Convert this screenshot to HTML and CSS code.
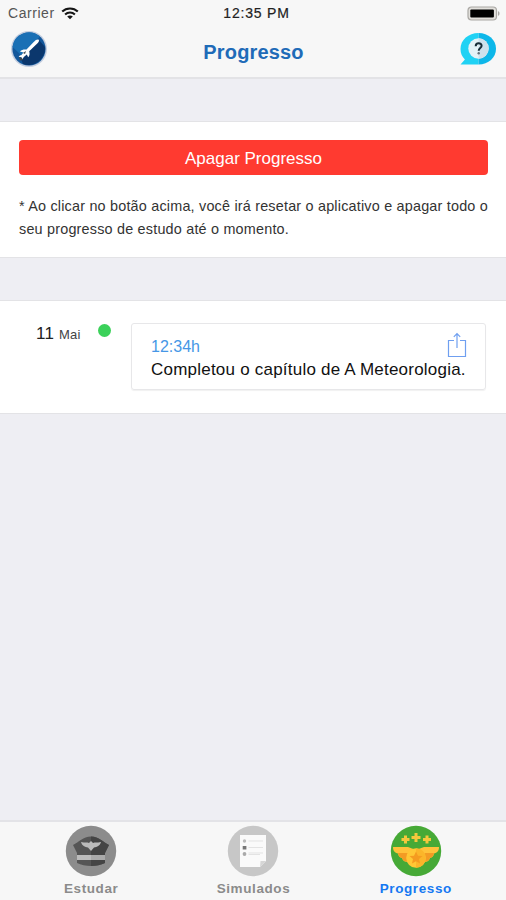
FILE: index.html
```html
<!DOCTYPE html>
<html lang="pt-BR">
<head>
<meta charset="utf-8">
<title>Progresso</title>
<link rel="stylesheet" href="styles.css">
</head>
<body>
<div class="app">
  <header class="header">
    <div class="status">
      <div class="status-left"><span class="carrier">Carrier</span>
        <svg class="wifi" width="18" height="13" viewBox="0 0 18 13" fill="none" stroke="#151515" stroke-width="2.1"><path d="M1.2 4.5C5.5.4 12.5.4 16.8 4.5M4.1 7.500c2.800-2.600 7-2.600 9.800 0"/><path d="M9 12.200 6.200 9.600c1.600-1.400 4-1.400 5.600 0z" fill="#151515" stroke="none"/></svg>
      </div>
      <span class="clock">12:35 PM</span>
      <svg class="battery" width="34" height="15" viewBox="0 0 34 15"><rect x="1" y="1" width="28.500" height="13" rx="3.500" fill="#e2e0dc" stroke="#aaa8a4" stroke-width="1.200"/><rect x="3.300" y="3.400" width="23.600" height="8.200" rx="1" fill="#000"/><path d="M31 5.300c2 .5 2 4 0 4.500z" fill="#aaa8a4"/></svg>
    </div>
    <div class="nav">
      <svg class="logo" width="38" height="38" viewBox="0 0 38 38"><circle cx="19" cy="19" r="18" fill="#c3cddf"/><circle cx="19" cy="19" r="16.600" fill="#12579b"/><path d="M2.500 17A16.600 16.600 0 0 1 30 6.500L11 25z" fill="#1a70b5"/><path d="M29 10 35 17a16.600 16.600 0 0 1-22 17l-2-5z" fill="#0b376d"/><path d="M28.500 9.500c-2-.5-3.500 1-4.800 2.500l-7.200 7.600c-2.300-.4-5 .2-6.500 1.800l3.500 1.200-2.300 2.700c-1.300 0-2 .5-2.500 1.500l2.800.4.800 2.400 1.500-2.500 3-2.700 1.400 2.800c1.600-1.500 1.600-3.800 1-6l8.600-8.200c1.300-1.300 1.600-2.600.7-3.500z" fill="#fff"/><path d="m9 27 3 1 1 2-3 .5zM13 23l3-2-1 3z" fill="#40484f"/></svg>
      <h1>Progresso</h1>
      <svg class="help" width="38" height="34" viewBox="0 0 38 34"><path d="M19.500 1C9.500 1 1.500 7.800 1.500 17c0 4.800 1.700 7.700 4.400 10.500L1.500 32.500h18z" fill="#20d2f4"/><path d="M19.500 1C29.500 1 37 8 37 16.800s-7.500 15.700-17.500 15.700z" fill="#0db7e9"/><circle cx="19.500" cy="16.500" r="10.200" fill="#e4f2f7"/><path d="M19.500 6.300a10.200 10.200 0 0 1 0 20.400z" fill="#cee1ec"/><path d="M16.700 14.300c0-4.200 5.900-3.800 5.900-.6 0 2.400-2.900 2.200-2.900 5" fill="none" stroke="#182d38" stroke-width="2"/><circle cx="19.700" cy="21.300" r="1.200" fill="#63717a"/></svg>
    </div>
  </header>
  <section class="panel reset">
    <button>Apagar Progresso</button>
    <p>* Ao clicar no botão acima, você irá resetar o aplicativo e apagar todo o<br>seu progresso de estudo até o momento.</p>
  </section>
  <section class="panel timeline">
    <div class="date">11 <small>Mai</small></div>
    <i class="dot"></i>
    <article class="card">
      <div class="card-head"><time>12:34h</time>
        <svg width="20" height="26" viewBox="0 0 20 26" fill="none" stroke="#6f9ff0" stroke-width="1.200"><path d="M7 8.500H1.500v16h17v-16H13M10 16V2M6.800 4.800 10 1.600l3.200 3.200"/></svg>
      </div>
      <p>Completou o capítulo de A Meteorologia.</p>
    </article>
  </section>
  <nav class="tabs">
    <div class="tab">
      <svg width="52" height="52" viewBox="0 0 52 52"><circle cx="26" cy="26" r="25.200" fill="#8c8c8c"/><path d="M8 20c6-3 10-8.500 18-8.500s12 5.500 18 8.500l-4 8v10c-8 4-20 4-28 0V28z" fill="#555"/><path d="M26 11.500c8 0 12 5.500 18 8.500l-4 8v10c-4 2-9 3-14 3z" fill="#444"/><path d="M12 30h28v5H12z" fill="#aaa"/><path d="M12 30h14v5H12z" fill="#bcbcbc"/><path d="M16 17c4 1 6 0 8 1l2-2 2 2c2-1 4 0 8-1-1 4-4 5-7 5.500L26 26l-3-3.500c-3-.5-6-1.500-7-5.500z" fill="#bbb"/></svg>
      <span>Estudar</span>
    </div>
    <div class="tab">
      <svg width="52" height="52" viewBox="0 0 52 52"><circle cx="26" cy="26" r="25.200" fill="#c7c7c7"/><path d="M13 10h26v26l-6 6H13z" fill="#fafafa"/><path d="m33 42 .5-6H39z" fill="#d6d6d6"/><path d="M21.500 16H36M21.500 22.500H36M21.500 28H36M21.500 29.500H33" stroke="#e3e3e3" stroke-width="1"/><circle cx="17.500" cy="16" r="1.700" fill="#bbb"/><rect x="15.700" y="21" width="3.700" height="3.500" fill="#777"/><circle cx="17.500" cy="29" r="1.900" fill="#aaa"/></svg>
      <span>Simulados</span>
    </div>
    <div class="tab active">
      <svg width="52" height="52" viewBox="0 0 52 52"><circle cx="26" cy="26" r="25.200" fill="#46a936"/><path d="M3 22h15l8 3 8-3h15c0 4-2 6-5 6.500-.5 3-2 4-4 4.500-1 3-3 4-6 4H18c-3 0-5-1-6-4-2-.5-3.500-1.500-4-4.500-3-.5-5-2.500-5-6.500z" fill="#ffc23a"/><path d="M8 28h10v9c-3-.3-5-1.500-6-4-2-.5-3.500-2-4-5zm36 0H34v9c3-.3 5-1.500 6-4 2-.5 3.500-2 4-5z" fill="#f39b24"/><circle cx="26" cy="33" r="9.800" fill="#ffc735"/><path d="M26 23.200a9.800 9.800 0 0 1 0 19.600z" fill="#fbb52a"/><path d="m26 26.500 2 4.200 4.500.4-3.500 3 1 4.500-4-2.400-4 2.400 1-4.500-3.500-3 4.500-.4z" fill="#f59b20"/><path d="M26 8v9M21.500 12.500h9M15.500 10.500v8M11.500 14.500h8M37 10.500v8M33 14.500h8" stroke="#f5c83c" stroke-width="3"/></svg>
      <span>Progresso</span>
    </div>
  </nav>
</div>
</body>
</html>
```

FILE: styles.css
```css
* { box-sizing: border-box; }
body { margin: 0; font-family: "Liberation Sans", Arial, sans-serif; color: #222; }
.app { height: 900px; background: #eeeef3; display: flex; flex-direction: column; }
.header { height: 79px; background: #f7f7f7; border-bottom: 2px solid #e3e3e6; }
.status { height: 26px; padding: 0 5px 0 8px; display: grid; grid-template-columns: 1fr auto 1fr; align-items: center; }
.status-left { display: flex; align-items: center; gap: 6px; }
.carrier { font-size: 14px; letter-spacing: .55px; color: #555; }
.clock { font-size: 14px; letter-spacing: .8px; padding-left: 4px; color: #222; -webkit-text-stroke: .2px #222; }
.battery { justify-self: end; }
.nav { height: 51px; padding: 0 9px 0 10px; display: grid; grid-template-columns: 38px 1fr 38px; align-items: center; }
.logo, .help { position: relative; top: -3px; }
h1 { margin: 0; padding-top: 2px; text-align: center; font-size: 20px; letter-spacing: .15px; color: #1f6bb8; }
.panel { background: #fff; border: solid #e3e3e6; border-width: 1px 0; }
.reset { height: 137px; margin-top: 42px; padding: 18px 18px 0 19px; }
button { display: block; width: 100%; height: 35px; padding: 2px 0 0; border: 0; border-radius: 4px; background: #ff3a30; color: #fff; font: 17px "Liberation Sans", Arial, sans-serif; }
.reset p { margin: 20px 0 0; font-size: 14.400px; line-height: 23px; letter-spacing: .2px; white-space: nowrap; color: #333; }
.timeline { height: 114px; margin-top: 42px; padding: 22px 20px 0 36px; display: flex; }
.date { width: 62px; padding-top: 1px; font-size: 17px; letter-spacing: .2px; white-space: nowrap; }
.date small { font-size: 13px; color: #444; }
.dot { width: 13px; height: 13px; margin-top: 1px; border-radius: 50%; background: #3bd15a; }
.card { width: 355px; height: 67px; margin-left: 20px; padding: 8px 18px 0 19px; border: 1px solid #e7e7e9; border-radius: 3px; box-shadow: 0 1px 1px #f1f1f1; }
.card-head { display: flex; justify-content: space-between; height: 27px; }
time { padding-top: 5px; font-size: 16px; line-height: 19px; color: #4697e6; }
.card p { margin: 0; font-size: 17px; line-height: 22px; letter-spacing: .22px; white-space: nowrap; color: #111; }
.tabs { height: 80px; margin-top: auto; padding: 4px 9px 0 10px; background: #f7f7f7; border-top: 2px solid #e3e3e7; display: grid; grid-template-columns: repeat(3, 1fr); }
.tab { display: flex; flex-direction: column; align-items: center; color: #8b8b8b; font-size: 13.500px; font-weight: bold; line-height: 15px; letter-spacing: .6px; }
.tab svg { display: block; margin: -1px 0 4px; }
.active { color: #1478f2; }
```
